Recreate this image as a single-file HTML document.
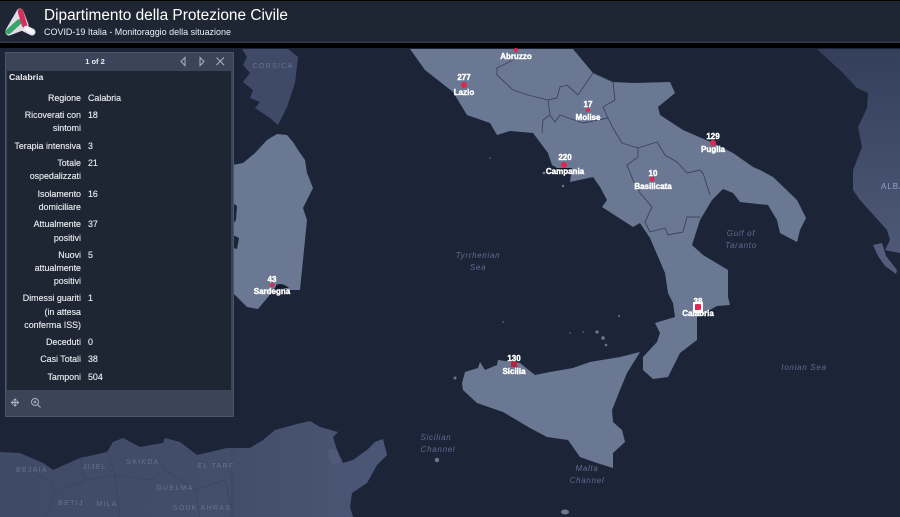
<!DOCTYPE html>
<html lang="it"><head><meta charset="utf-8"><title>Dipartimento della Protezione Civile</title>
<style>
html,body{margin:0;padding:0;width:900px;height:517px;overflow:hidden;background:#1c2538}
svg{display:block;filter:blur(.3px)}
text{font-family:"Liberation Sans",sans-serif}
.l{font-size:8.9px;fill:#eceef3;text-anchor:end;stroke:#eceef3;stroke-width:.12px}
.v{font-size:8.9px;fill:#eceef3;stroke:#eceef3;stroke-width:.12px}
.m{font-size:8px;font-weight:bold;fill:#fff;text-anchor:middle;paint-order:stroke;stroke:#fff;stroke-width:.4px}
.s{font-size:8px;font-style:italic;fill:#5d6b90;text-anchor:middle;letter-spacing:.7px}
.c{font-size:7px;fill:#66738f;text-anchor:middle;letter-spacing:1.3px}
.b{fill:none;stroke:#39445e;stroke-width:.9}
</style></head><body>
<svg width="900" height="517" viewBox="0 0 900 517" xmlns="http://www.w3.org/2000/svg">
<defs><linearGradient id="alb" x1="0" y1="0" x2="0" y2="1"><stop offset="0" stop-color="#343f5c"/><stop offset="1" stop-color="#4d5977"/></linearGradient>
<linearGradient id="afr" x1="0" y1="0" x2="1" y2="0"><stop offset="0" stop-color="#3f4a66"/><stop offset=".6" stop-color="#434e6b"/><stop offset="1" stop-color="#4b5776"/></linearGradient></defs>
<rect width="900" height="517" fill="#1c2538"/>

<!-- Foreign land -->
<path fill="url(#afr)" d="M0 452L20 453L43 463L53 470L80 458L107 452L113 442L123 438L140 447L163 443L165 438L180 442L197 455L227 448L250 448L263 440L275 430L297 424L310 421L320 427L338 432L333 437L337 450L343 463L353 460L367 450L375 442L383 439L387 455L377 465L367 483L352 493L350 507L353 517L0 517Z"/>
<path fill="#4f5b79" d="M329 448L337 450L341 462L333 464L328 458Z"/>
<path fill="#3f4a68" d="M242 49L247 57L243 65L250 73L243 82L253 90L250 98L260 102L255 108L270 118L278 125L287 107L295 83L298 57L288 49Z"/>
<path fill="url(#alb)" d="M817 49L843 73L857 88L868 93L867 108L858 127L862 147L853 170L853 190L860 200L887 230L890 240L885 250L900 253L900 49Z"/>
<path fill="#515d7b" d="M873 245L882 243L886 256L897 270L896 274L885 266L878 256Z"/>
<g fill="none" stroke="#39445f" stroke-width=".7">
<path d="M25 470L50 480L55 495L45 517M80 458L85 480L60 490M107 452L115 475L85 480M115 475L150 480L165 470L195 490L225 480L232 510M165 470L155 455M195 490L200 517M115 475L120 517M232 450L232 517"/>
</g>

<!-- Italy -->
<g fill="#6b7894">
<path d="M410 49L425 70L453 92L467 115L490 123L497 135L510 131L533 133L548 153L552 165L557 168L572 168L570 182L593 177L600 187L607 200L602 207L633 227L640 223L650 238L665 273L668 293L673 303L675 317L655 323L660 333L657 342L643 357L643 370L653 379L668 377L680 353L697 340L697 317L717 306L730 305L728 297L728 270L703 255L692 245L700 220L712 200L723 189L733 193L740 202L768 205L777 220L780 233L797 242L800 230L806 218L797 200L773 177L760 170L753 167L733 153L713 143L683 130L660 115L658 107L675 93L670 82L633 83L613 82L593 73L573 49Z"/>
<path d="M462 383L465 372L478 368L480 362L485 370L497 365L498 360L520 363L535 375L550 372L573 368L590 362L620 357L640 352L627 373L620 390L612 410L613 422L622 430L625 442L613 453L613 468L597 463L580 457L568 440L547 437L530 428L503 412L477 403L463 390Z"/>
<path d="M233 165L243 163L255 153L267 140L277 134L287 135L293 142L298 150L305 160L307 173L313 188L303 208L307 220L305 240L300 290L287 290L277 285L268 297L258 309L247 307L233 293Z"/>
<circle cx="280" cy="137" r="2"/><circle cx="597" cy="332" r="1.6"/><circle cx="603" cy="338" r="1.8"/><circle cx="606" cy="345" r="1.3"/><circle cx="619" cy="316" r="1"/><circle cx="503" cy="322" r=".8"/><circle cx="583" cy="332" r=".8"/><circle cx="570" cy="333" r=".7"/><circle cx="455" cy="378" r="1.5"/><circle cx="563" cy="186" r="1.2"/><circle cx="544" cy="173" r="1.4"/><circle cx="490" cy="158" r=".8"/><circle cx="437" cy="460" r="2.2"/><ellipse cx="565" cy="512" rx="4" ry="2.5"/>
</g>
<path fill="#1c2538" d="M233 203L237 206L236 220L233 224ZM233 235L239 238L237 249L233 248Z"/>

<!-- Region borders -->
<g class="b">
<path d="M513 60L497 68L497 75L513 90L528 95L548 100L550 115L543 120L542 133"/>
<path d="M593 73L578 95L567 85L560 87L557 98L548 100"/>
<path d="M593 73L613 82L615 100L603 107L608 118L613 128L622 143L638 148L638 157L627 165L633 180L640 193L652 207L645 222L650 232"/>
<path d="M608 118L583 123L560 115L555 122L550 115"/>
<path d="M638 148L657 142L665 155L677 162L687 173L700 170L703 173L710 195"/>
<path d="M650 232L665 228L668 235L683 232L687 217L700 217"/>
</g>

<!-- Map labels -->
<text class="s" x="478" y="258">Tyrrhenian</text><text class="s" x="478" y="270">Sea</text>
<text class="s" x="741" y="236">Gulf of</text><text class="s" x="741" y="248">Taranto</text>
<text class="s" x="804" y="370">Ionian Sea</text>
<text class="s" x="436" y="440">Sicilian</text><text class="s" x="438" y="452">Channel</text>
<text class="s" x="587" y="471">Malta</text><text class="s" x="587" y="483">Channel</text>
<text x="881" y="189" font-size="8" fill="#95a2c4" letter-spacing="1">ALBA</text>
<text class="c" x="273" y="68">CORSICA</text>
<text class="c" x="32" y="472">BEJAIA</text><text class="c" x="95" y="469">JIJEL</text><text class="c" x="143" y="464">SKIKDA</text><text class="c" x="216" y="468">EL TARF</text><text class="c" x="175" y="490">GUELMA</text><text class="c" x="71" y="505">BETIJ</text><text class="c" x="107" y="506">MILA</text><text class="c" x="202" y="510">SOUK AHRAS</text>

<!-- Markers -->
<g fill="#e2264f">
<circle cx="516" cy="50" r="2"/><circle cx="464" cy="85" r="3"/><circle cx="588" cy="110" r="2"/>
<path fill="#0f1420" d="M554 168H571V169H554Z"/>
<circle cx="564" cy="165" r="3"/><circle cx="652" cy="179" r="2.5"/><circle cx="713" cy="143" r="3"/>
<rect x="693" y="302" width="10" height="11" fill="#fff"/><rect x="695" y="304" width="6" height="6"/>
<rect x="511" y="361" width="6" height="6" fill="#b8213f"/><circle cx="272" cy="285" r="2"/>
</g>
<path fill="#141b2b" d="M276 285Q282 282 289 288H276Z"/>
<text class="m" x="516" y="59">Abruzzo</text>
<text class="m" x="464" y="80">277</text><text class="m" x="464" y="95">Lazio</text>
<text class="m" x="588" y="107">17</text><text class="m" x="588" y="120">Molise</text>
<text class="m" x="565" y="160">220</text><text class="m" x="565" y="174">Campania</text>
<text class="m" x="653" y="176">10</text><text class="m" x="653" y="189">Basilicata</text>
<text class="m" x="713" y="139">129</text><text class="m" x="713" y="152">Puglia</text>
<text class="m" x="698" y="304">38</text><text class="m" x="698" y="316">Calabria</text>
<text class="m" x="514" y="361">130</text><text class="m" x="514" y="374">Sicilia</text>
<text class="m" x="272" y="282">43</text><text class="m" x="272" y="294">Sardegna</text>

<!-- Header -->
<rect width="900" height="48" fill="#000"/>
<rect y="1" width="900" height="40" fill="#1f2633"/>
<rect y="41" width="900" height="2" fill="#2a3543"/>
<g fill="none" stroke-linecap="round">
<path d="M20 12L9 31M20 12L25 25M9 32L22 27L32 32" stroke="#e4dde8" stroke-width="7" stroke-linejoin="round"/>
<path d="M8.500 31.500L19 22" stroke="#35a568" stroke-width="5.500"/>
<path d="M20.500 11.500L24.500 25" stroke="#d72f5d" stroke-width="5.500"/>
<path d="M26 28L32.500 32" stroke="#f7f3f6" stroke-width="4.500"/>
</g>
<text x="44" y="20" font-size="15.500" fill="#fff" textLength="244" lengthAdjust="spacingAndGlyphs">Dipartimento della Protezione Civile</text>
<text x="44" y="35" font-size="9.500" fill="#eceef4" textLength="187" lengthAdjust="spacingAndGlyphs">COVID-19 Italia - Monitoraggio della situazione</text>

<!-- Popup -->
<rect x="5.500" y="52.500" width="228" height="364" fill="#3b4559" stroke="#4b566d" stroke-width="1"/>
<rect x="7" y="71" width="224" height="319" fill="#1f2633"/>
<text x="95" y="64" font-size="7.500" font-weight="bold" fill="#e8eaf0" text-anchor="middle">1 of 2</text>
<g fill="none" stroke="#a9b2c6" stroke-width="1">
<path d="M185 57.500L181 61.500L185 65.500Z"/><path d="M200 57.500L204 61.500L200 65.500Z"/>
<path d="M216.500 57.500L224 65M224 57.500L216.500 65"/>
<path d="M15 399V406M11.500 402.500H18.500M13.500 400.500L15 399L16.500 400.500M13.500 404.500L15 406L16.500 404.500M13 401L11.500 402.500L13 404M17 401L18.500 402.500L17 404"/>
<circle cx="35" cy="402" r="3.500"/><path d="M37.500 404.500L40.500 407.500M33.500 402H36.500M35 400.500V403.500"/>
</g>
<text x="9" y="80" font-size="8.700" font-weight="bold" fill="#eef0f5">Calabria</text>
<g>
<text class="l" x="81" y="101">Regione</text><text class="v" x="88" y="101">Calabria</text>
<text class="l" x="81" y="118">Ricoverati con</text><text class="l" x="81" y="131">sintomi</text><text class="v" x="88" y="118">18</text>
<text class="l" x="81" y="149">Terapia intensiva</text><text class="v" x="88" y="149">3</text>
<text class="l" x="81" y="166">Totale</text><text class="l" x="81" y="179">ospedalizzati</text><text class="v" x="88" y="166">21</text>
<text class="l" x="81" y="197">Isolamento</text><text class="l" x="81" y="210">domiciliare</text><text class="v" x="88" y="197">16</text>
<text class="l" x="81" y="227">Attualmente</text><text class="l" x="81" y="241">positivi</text><text class="v" x="88" y="227">37</text>
<text class="l" x="81" y="258">Nuovi</text><text class="l" x="81" y="271">attualmente</text><text class="l" x="81" y="284">positivi</text><text class="v" x="88" y="258">5</text>
<text class="l" x="81" y="301">Dimessi guariti</text><text class="l" x="81" y="315">(in attesa</text><text class="l" x="81" y="328">conferma ISS)</text><text class="v" x="88" y="301">1</text>
<text class="l" x="81" y="345">Deceduti</text><text class="v" x="88" y="345">0</text>
<text class="l" x="81" y="362">Casi Totali</text><text class="v" x="88" y="362">38</text>
<text class="l" x="81" y="380">Tamponi</text><text class="v" x="88" y="380">504</text>
</g>
</svg>
</body></html>
